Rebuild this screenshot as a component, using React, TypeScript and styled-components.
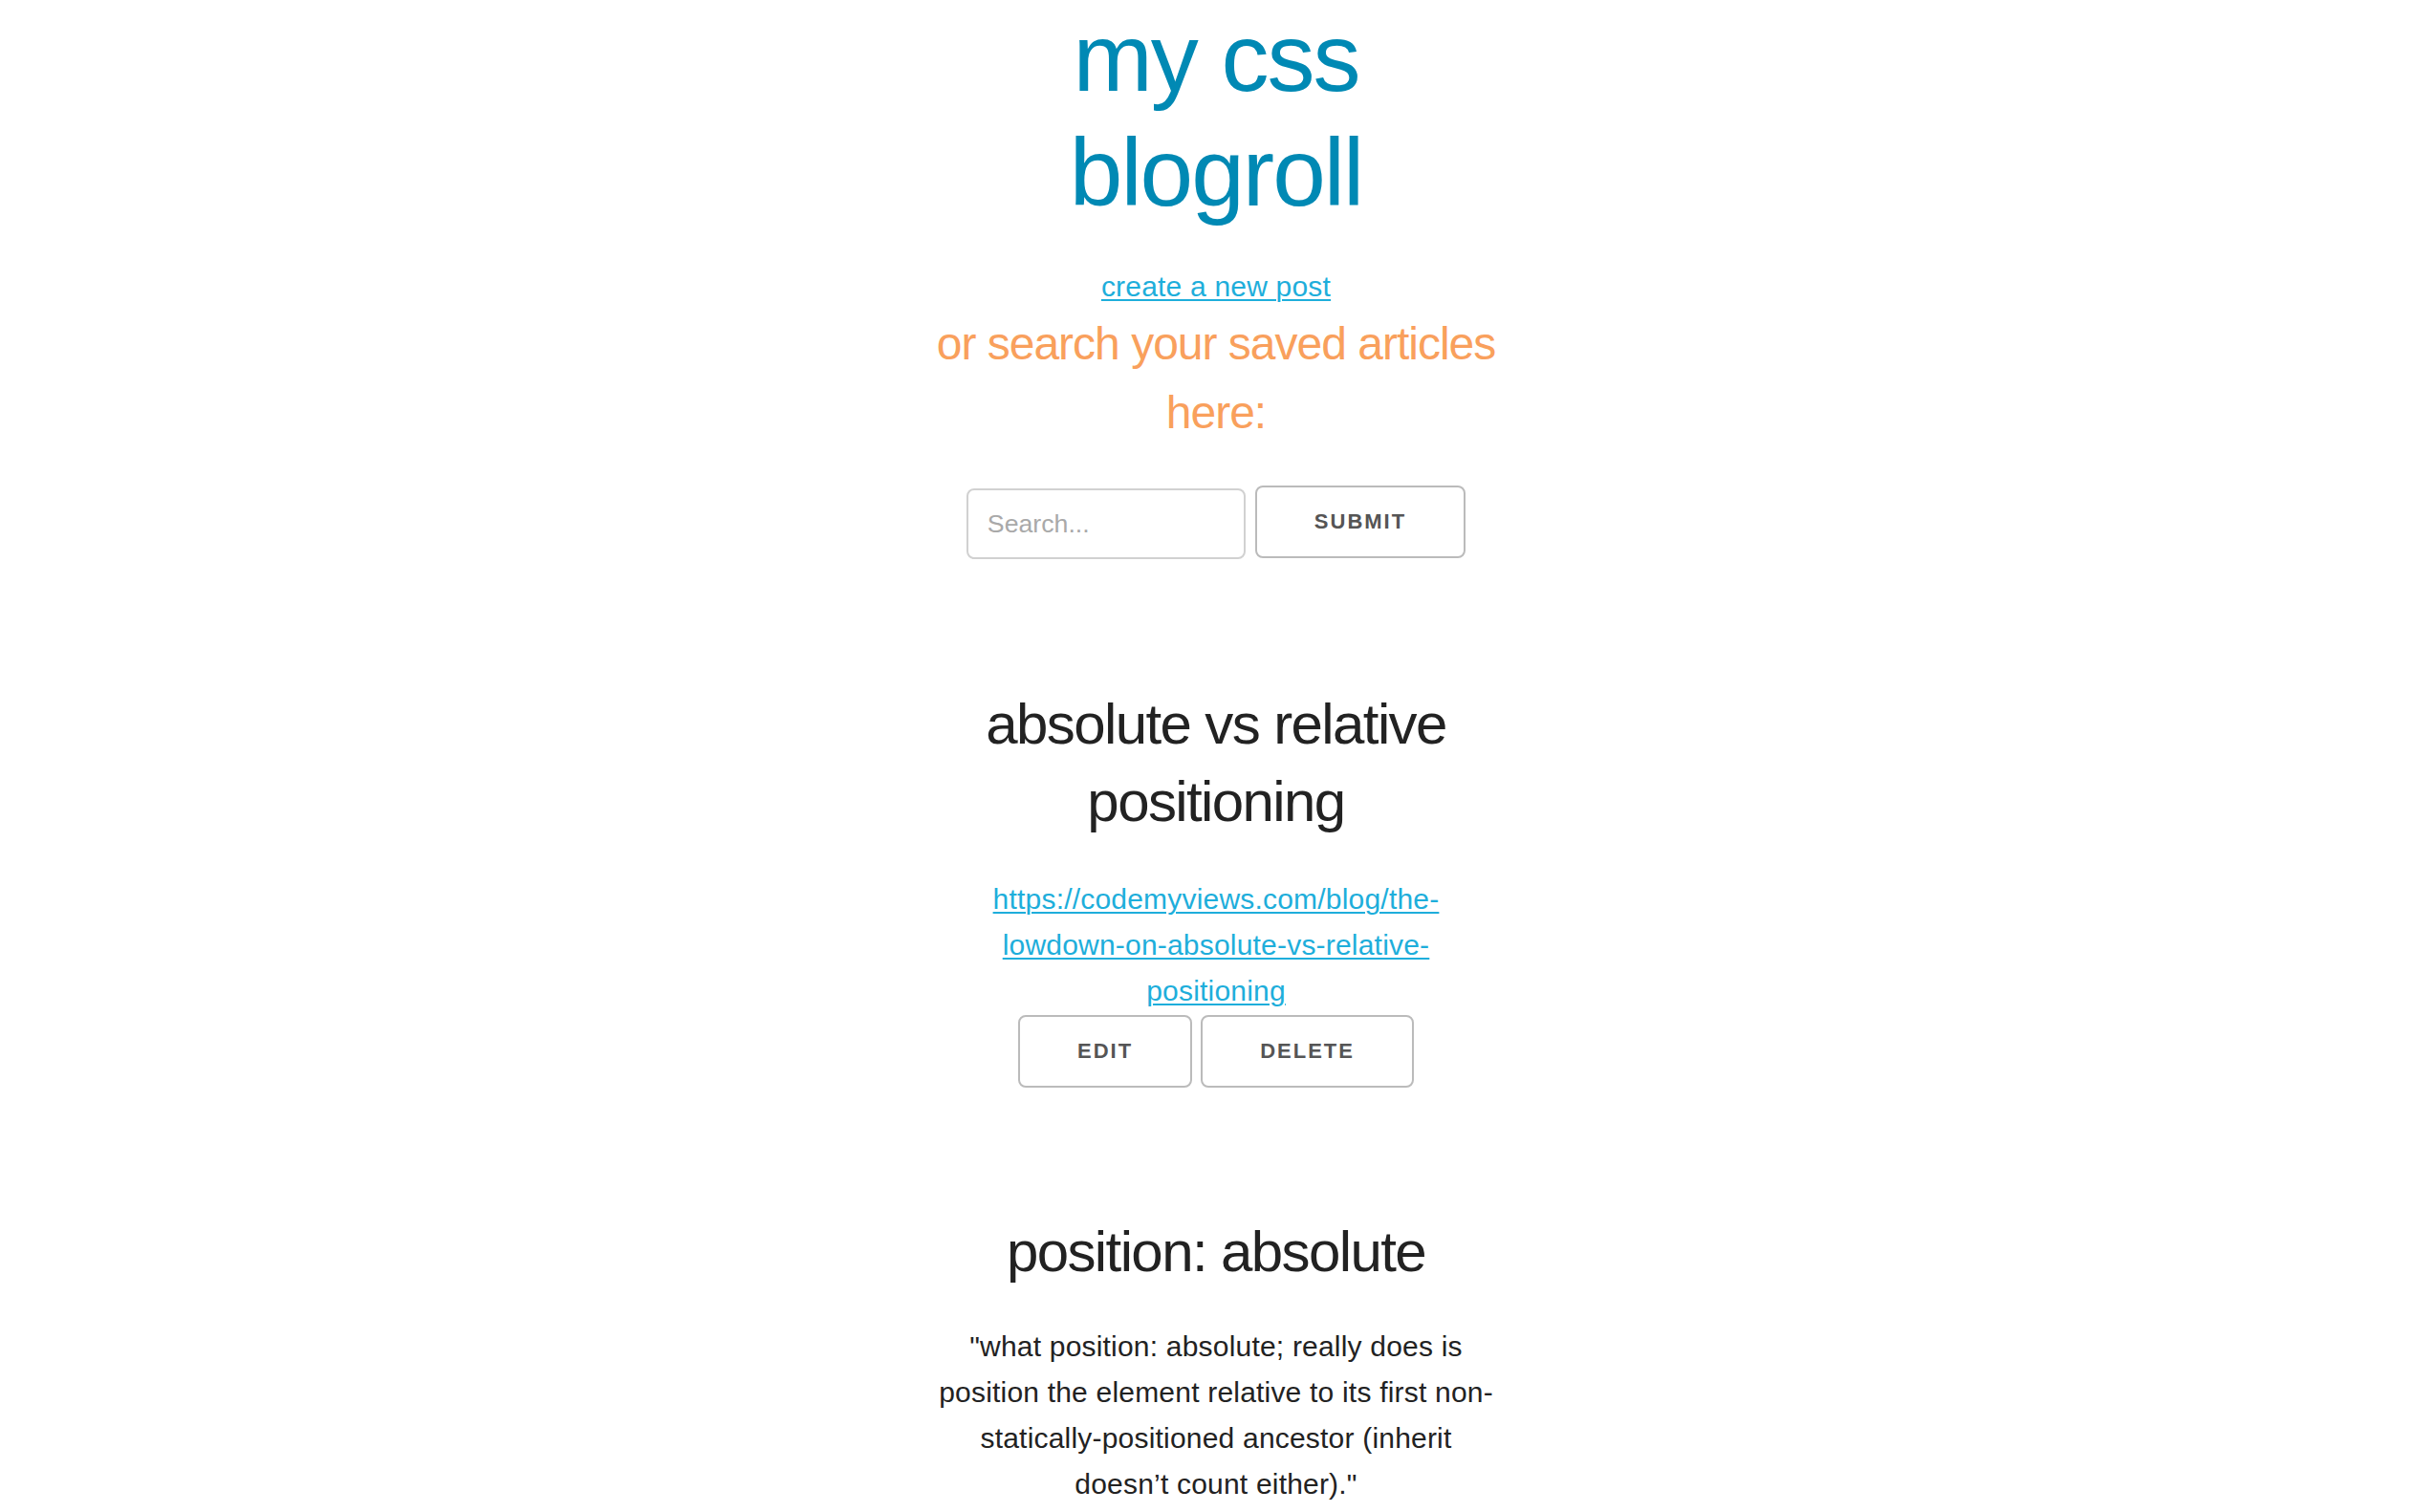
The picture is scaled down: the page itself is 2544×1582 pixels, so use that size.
import React from "react";
import styled, { createGlobalStyle } from "styled-components";

const GlobalStyle = createGlobalStyle`
  html, body {
    margin: 0;
    padding: 0;
    background: #ffffff;
  }
  body {
    font-family: "Liberation Sans", Arial, Helvetica, sans-serif;
    font-size: 30px;
    line-height: 48px;
    color: #222222;
  }
  * { box-sizing: border-box; }
`;

const Column = styled.main`
  width: 590px;
  margin: 0 auto;
  text-align: center;
  display: flex;
  flex-direction: column;
`;

const Header = styled.header`
  display: flex;
  flex-direction: column;
  align-items: center;
`;

const SiteTitle = styled.h1`
  margin: 0;
  font-size: 100px;
  line-height: 120px;
  font-weight: 400;
  letter-spacing: -2px;
  color: #0089b4;
`;

const LinkLine = styled.div<{ $top?: number }>`
  margin-top: ${(p) => p.$top ?? 0}px;
  font-size: 30px;
  line-height: 48px;
  letter-spacing: 0.2px;
`;

const TextLink = styled.a`
  color: #1eaedb;
  text-decoration: underline;
  text-decoration-thickness: 2px;
  text-underline-offset: 3px;
`;

const Tagline = styled.h5`
  margin: 0;
  font-size: 48px;
  line-height: 72px;
  font-weight: 400;
  letter-spacing: -1px;
  color: #f9a05c;
`;

const SearchForm = styled.form`
  margin-top: 40px;
  display: flex;
  justify-content: center;
  align-items: flex-start;
  gap: 10px;
`;

const SearchInput = styled.input`
  width: 292px;
  height: 74px;
  margin-top: 3px;
  padding: 12px 20px;
  border: 2px solid #d1d1d1;
  border-radius: 8px;
  background: #fff;
  font-family: "Liberation Sans", Arial, sans-serif;
  font-size: 26.7px;
  color: #222;
  outline: none;
  &::placeholder {
    color: #a9a9a9;
  }
`;

const Button = styled.button`
  height: 76px;
  padding: 0 60px;
  border: 2px solid #bbbbbb;
  border-radius: 8px;
  background: transparent;
  color: #555555;
  font-family: "Liberation Sans", Arial, sans-serif;
  font-size: 22px;
  font-weight: 700;
  line-height: 72px;
  letter-spacing: 2px;
  text-transform: uppercase;
  white-space: nowrap;
  cursor: pointer;
`;

const Post = styled.article<{ $top: number }>`
  margin-top: ${(p) => p.$top}px;
  display: flex;
  flex-direction: column;
  align-items: center;
`;

const PostTitle = styled.h4`
  margin: 0;
  font-size: 60px;
  line-height: 81px;
  font-weight: 400;
  letter-spacing: -1.6px;
  color: #222222;
`;

const Actions = styled.div`
  margin-top: 1px;
  display: flex;
  justify-content: center;
  gap: 9px;
`;

const Quote = styled.p`
  margin: 35px 0 0;
  font-size: 30px;
  line-height: 48px;
  letter-spacing: 0.2px;
  color: #222222;
`;

export default function App() {
  return (
    <>
      <GlobalStyle />
      <Column>
        <Header>
          <SiteTitle>my css blogroll</SiteTitle>
          <LinkLine $top={36}>
            <TextLink href="#">create a new post</TextLink>
          </LinkLine>
          <Tagline>or search your saved articles here:</Tagline>
        </Header>
        <SearchForm onSubmit={(e) => e.preventDefault()}>
          <SearchInput type="text" placeholder="Search..." />
          <Button type="submit">Submit</Button>
        </SearchForm>

        <Post $top={132}>
          <PostTitle>absolute vs relative positioning</PostTitle>
          <LinkLine $top={38}>
            <TextLink href="#">
              https://codemyviews.com/blog/the-lowdown-on-absolute-vs-relative-positioning
            </TextLink>
          </LinkLine>
          <Actions>
            <Button type="button">Edit</Button>
            <Button type="button">Delete</Button>
          </Actions>
        </Post>

        <Post $top={131}>
          <PostTitle>position: absolute</PostTitle>
          <Quote>
            "what position: absolute; really does is position the element relative to its first non-statically-positioned ancestor (inherit doesn’t count either)."
          </Quote>
        </Post>
      </Column>
    </>
  );
}
